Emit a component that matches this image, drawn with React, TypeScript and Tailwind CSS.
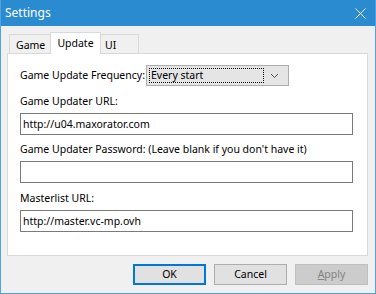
const fields = [
  { label: 'Game Updater URL:', value: 'http://u04.maxorator.com', gap: 'mt-[8px]' },
  { label: "Game Updater Password: (Leave blank if you don't have it)", value: '', gap: 'mt-[7px]' },
  { label: 'Masterlist URL:', value: 'http://master.vc-mp.ovh', gap: 'mt-[8px]' },
]

export default function App() {
  return (
    <div className="w-[376px] h-[294px] bg-[#F0F0F0] border-x border-b border-[#4FA3E3] flex flex-col font-['Noto_Sans',sans-serif] text-[10.5px] text-black whitespace-nowrap">
      {/* Title bar */}
      <div className="h-[26px] bg-[#2B8BD0] flex items-center justify-between pl-[4px] pr-[9px] text-white">
        <span className="text-[12px] leading-none">Settings</span>
        <svg width="11" height="11" viewBox="0 0 11 11">
          <path d="M0.5 0.5 L10.5 10.5 M10.5 0.5 L0.5 10.5" stroke="white" strokeWidth="1" />
        </svg>
      </div>

      <div className="px-[6px] pt-[6px]">
        {/* Tabs */}
        <div className="flex items-end h-[21px] ml-[2px]">
          <div className="w-[41px] h-[19px] border-l border-t border-[#D9D9D9] bg-[#F0F0F0] flex items-center pl-[6px] pt-[2px] leading-none">
            Game
          </div>
          <div className="relative z-10 -mb-px w-[51px] h-[22px] border-x border-t border-[#D9D9D9] bg-white flex items-center justify-center pb-[1px] leading-none">
            Update
          </div>
          <div className="w-[38px] h-[19px] border-r border-t border-[#D9D9D9] bg-[#F0F0F0] flex items-center pl-[4px] pt-[2px] leading-none">
            UI
          </div>
        </div>

        {/* Panel */}
        <div className="w-[361px] h-[203px] border border-[#D9D9D9] bg-white pl-[12px] pt-[11px]">
          <div className="flex items-center h-[21px]">
            <span className="w-[126px] leading-[15px]">Game Update Frequency:</span>
            <div className="w-[143px] h-[21px] border border-[#ADADAD] bg-[#E5E5E5] flex items-center pl-[2px] pr-[6px]">
              <div className="flex-1 h-[15px] border border-dotted border-black leading-[13px] pl-px">
                Every start
              </div>
              <svg width="16" height="8" viewBox="0 0 16 8" className="ml-[2px]">
                <path d="M5 2 L8.5 5.5 L12 2" fill="none" stroke="#505050" strokeWidth="1" />
              </svg>
            </div>
          </div>

          {fields.map((f) => (
            <div key={f.label} className={f.gap}>
              <div className="h-[15px] leading-[15px]">{f.label}</div>
              <div className="mt-[4px] w-[333px] h-[22px] border border-[#7A7A7A] bg-white flex items-center pl-[2px] leading-none">
                {f.value}
              </div>
            </div>
          ))}
        </div>
      </div>

      {/* Buttons */}
      <div className="flex justify-end gap-[8px] pr-[7px] mt-[8px]">
        <button className="w-[73px] h-[21px] border-2 border-[#0078D7] bg-[#E1E1E1] leading-none">OK</button>
        <button className="w-[73px] h-[21px] border border-[#ADADAD] bg-[#E1E1E1] leading-none">Cancel</button>
        <button className="w-[73px] h-[21px] border border-[#BFBFBF] bg-[#CCCCCC] text-[#838383] leading-none">
          <span className="underline">A</span>pply
        </button>
      </div>
    </div>
  )
}
